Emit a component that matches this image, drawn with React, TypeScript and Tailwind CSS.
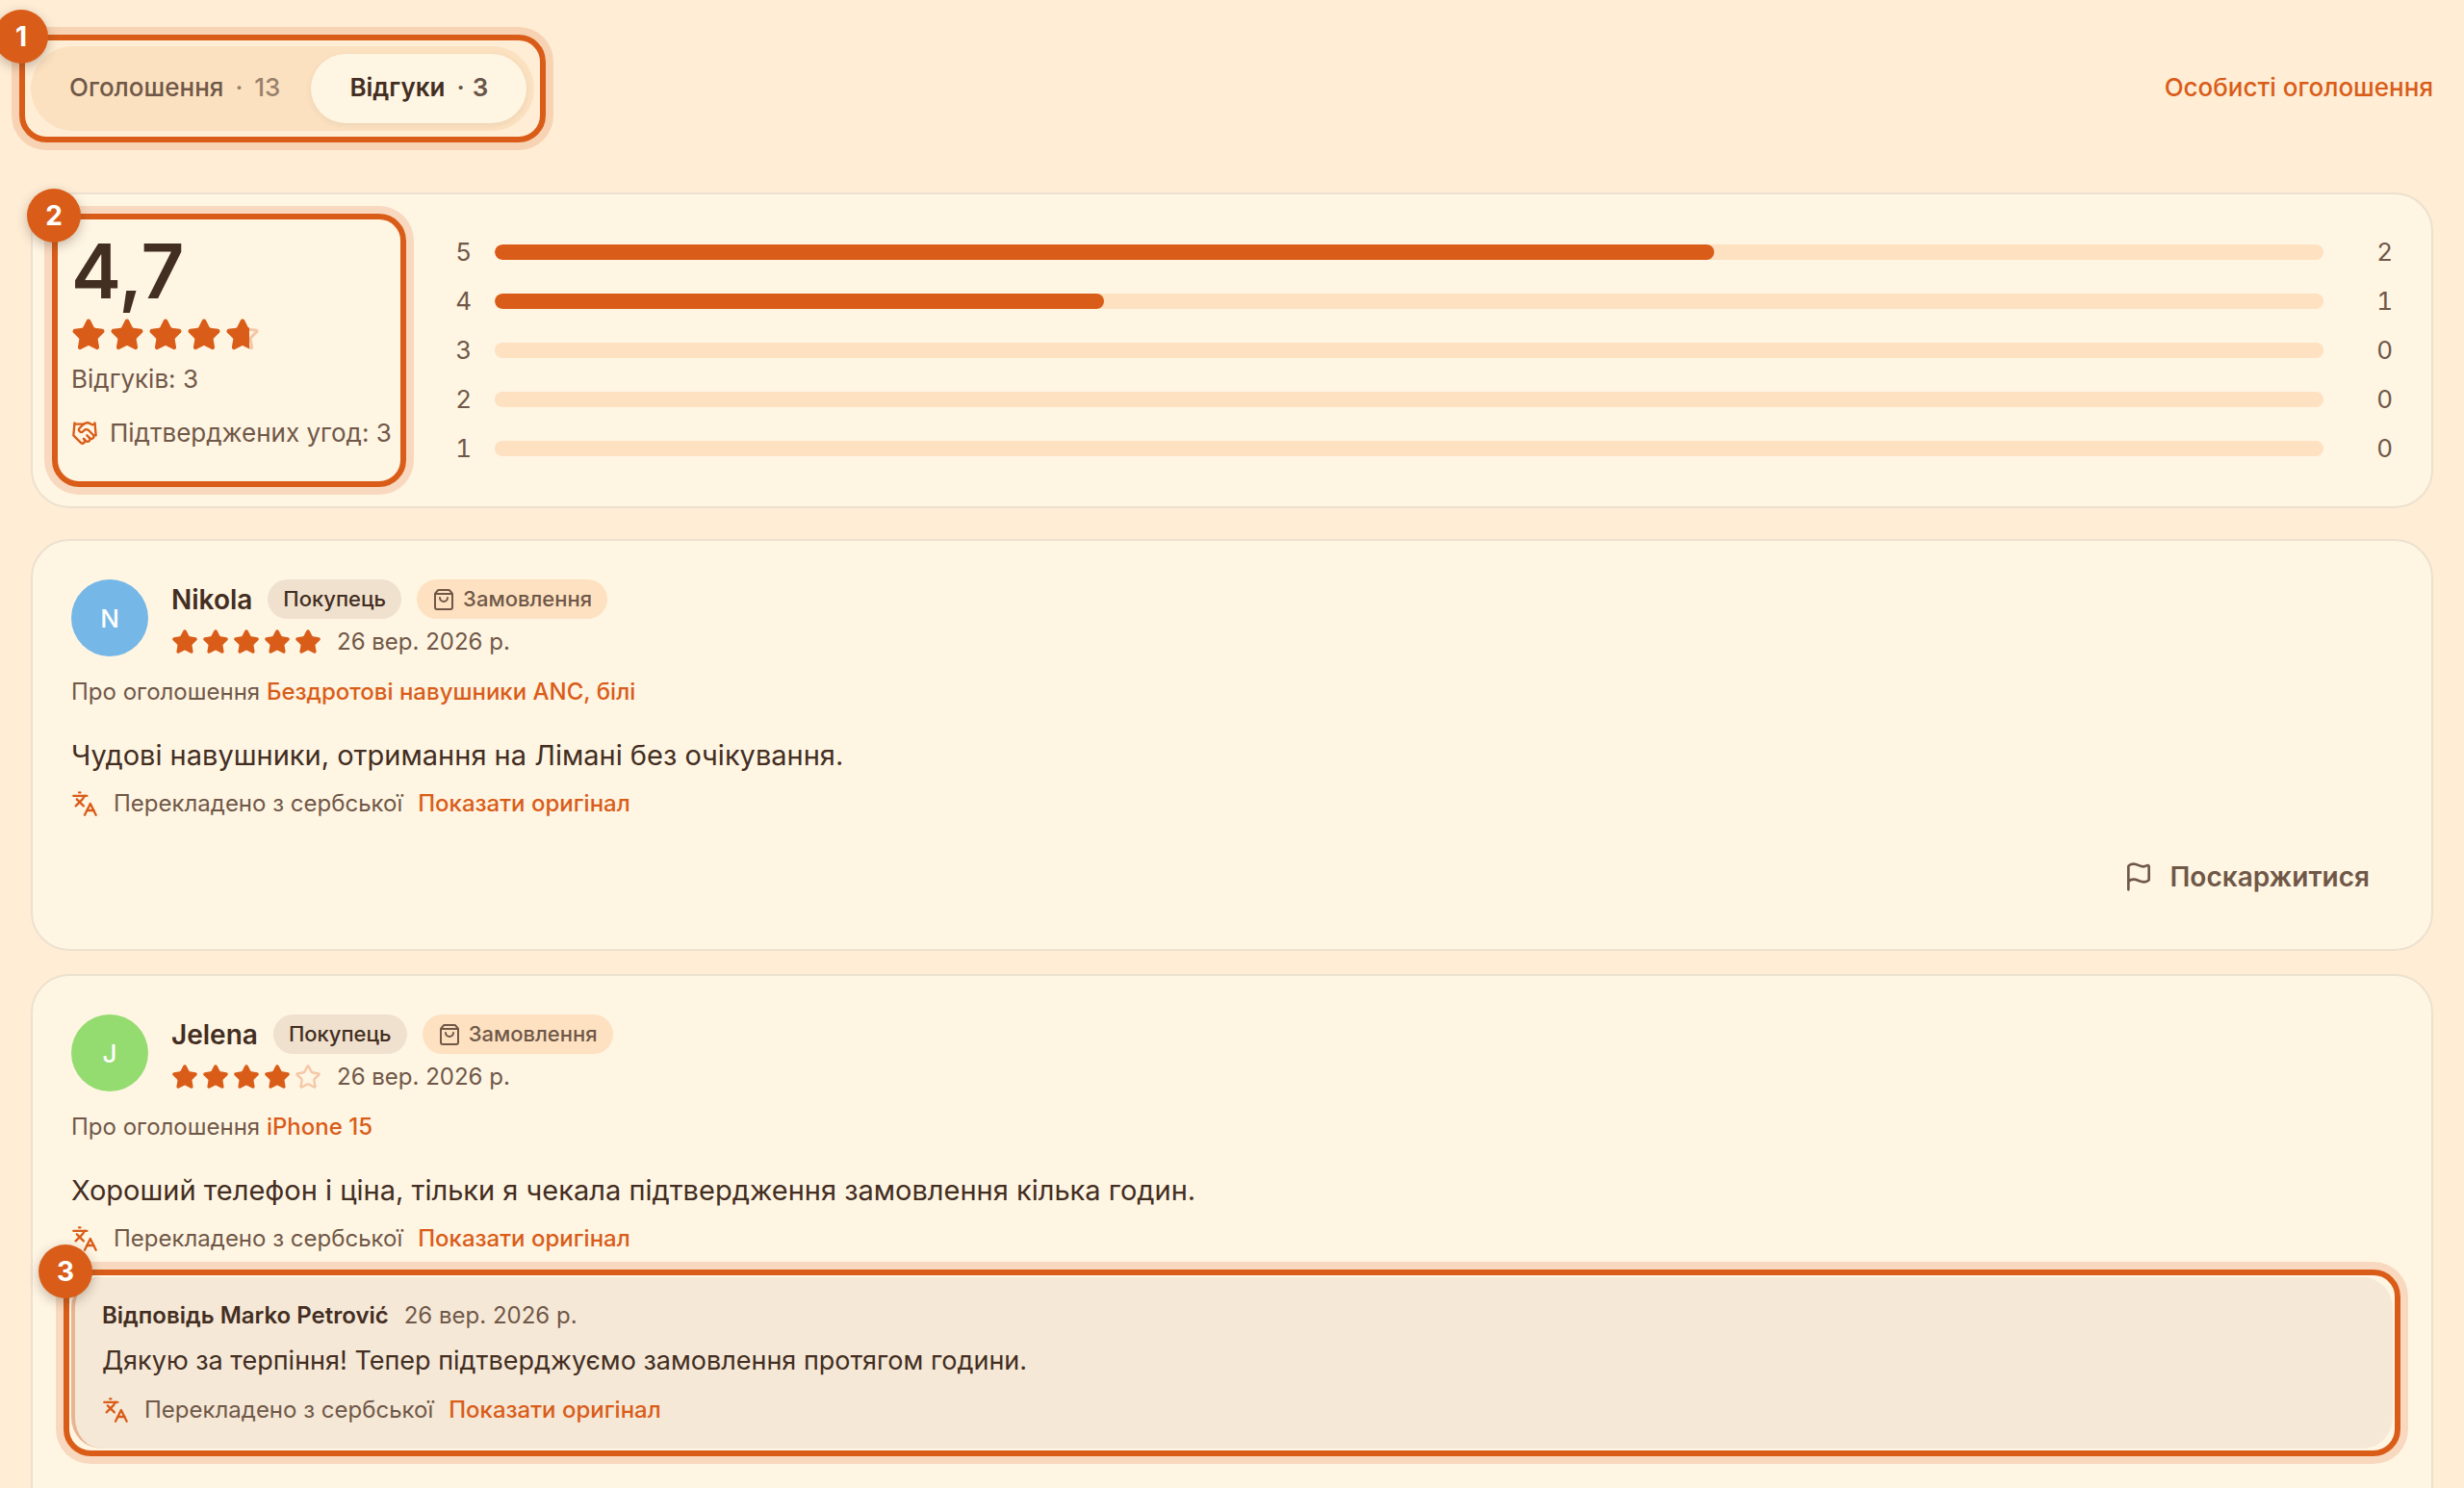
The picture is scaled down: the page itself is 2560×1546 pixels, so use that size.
import React, { useState } from 'react';
import { Flag, Handshake, Languages, ShoppingBag, Star } from 'lucide-react';

interface Reply {
  author: string;
  date: string;
  text: string;
}

interface Review {
  name: string;
  color: string;
  rating: number;
  date: string;
  listing: string;
  text: string;
  reply?: Reply;
}

const distribution = [
  { stars: 5, count: 2 },
  { stars: 4, count: 1 },
  { stars: 3, count: 0 },
  { stars: 2, count: 0 },
  { stars: 1, count: 0 },
];

const total = 3;

const reviews: Review[] = [
  {
    name: 'Nikola',
    color: 'bg-[#75b7e6]',
    rating: 5,
    date: '26 вер. 2026 р.',
    listing: 'Бездротові навушники ANC, білі',
    text: 'Чудові навушники, отримання на Лімані без очікування.',
  },
  {
    name: 'Jelena',
    color: 'bg-[#94dc70]',
    rating: 4,
    date: '26 вер. 2026 р.',
    listing: 'iPhone 15',
    text: 'Хороший телефон і ціна, тільки я чекала підтвердження замовлення кілька годин.',
    reply: {
      author: 'Marko Petrović',
      date: '26 вер. 2026 р.',
      text: 'Дякую за терпіння! Тепер підтверджуємо замовлення протягом години.',
    },
  },
];

// Numbered frame drawn over the block it points at
const Callout: React.FC<{ step: number; inset: string }> = ({ step, inset }) => (
  <div className={`pointer-events-none absolute z-10 rounded-[28px] border-6 border-[#d95d19] shadow-[0_0_0_8px_rgba(217,93,25,0.18)] ${inset}`}>
    <span className="absolute -left-8 -top-8 flex size-14 items-center justify-center rounded-full bg-[#d95d19] text-[28px] font-bold text-white shadow-[0_4px_12px_rgba(67,46,34,0.3)]">
      {step}
    </span>
  </div>
);

const Stars: React.FC<{ value: number; size: number }> = ({ value, size }) => (
  <div className="flex gap-1" role="img" aria-label={`${value} / 5`}>
    {[0, 1, 2, 3, 4].map((i) => {
      const part = Math.max(0, Math.min(1, value - i));
      return (
        <span key={i} className="relative block">
          <Star size={size} className={part === 1 ? 'fill-[#d95d19] text-[#d95d19]' : 'text-[#d95d19]/30'} />
          {part > 0 && part < 1 && (
            <span className="absolute inset-y-0 left-0 overflow-hidden" style={{ width: `${part * 100}%` }}>
              <Star size={size} className="max-w-none fill-[#d95d19] text-[#d95d19]" />
            </span>
          )}
        </span>
      );
    })}
  </div>
);

const Translated: React.FC = () => (
  <div className="flex items-center gap-4 text-[24px] leading-10">
    <Languages size={28} className="text-[#d95d19]" />
    <span>Перекладено з сербської</span>
    <button type="button" className="font-medium text-[#d95d19]">Показати оригінал</button>
  </div>
);

const ReviewCard: React.FC<{ review: Review }> = ({ review }) => (
  <article className={`rounded-[40px] border-2 border-[#ece1cf] bg-[#fff5e3] px-10 pt-10 ${review.reply ? 'pb-28' : 'pb-10'}`}>
    <div className="flex gap-6">
      <div className={`flex size-20 shrink-0 items-center justify-center rounded-full text-[26px] font-medium text-white ${review.color}`}>
        {review.name[0]}
      </div>
      <div>
        <div className="flex h-[41px] items-center gap-4">
          <span className="text-[28px] font-semibold text-[#432e22]">{review.name}</span>
          <span className="flex h-full items-center rounded-full bg-[#f0e1ce] px-4 text-[22px] font-medium text-[#432e22]">Покупець</span>
          <span className="flex h-full items-center gap-2 rounded-full bg-[#fde1c1] px-4 text-[22px] font-medium">
            <ShoppingBag size={24} />
            Замовлення
          </span>
        </div>
        <div className="mt-1 flex items-center gap-4 text-[24px] leading-10">
          <Stars value={review.rating} size={28} />
          <span>{review.date}</span>
        </div>
      </div>
    </div>
    <p className="mt-3 text-[24px] leading-10">
      Про оголошення <a href="#listing" className="font-medium text-[#d95d19]">{review.listing}</a>
    </p>
    <p className="mt-6 mb-2 text-[29px] leading-11 text-[#432e22]">{review.text}</p>
    <Translated />
    {review.reply ? (
      <div className="relative mt-5 rounded-[32px] border-l-4 border-[#e8b593] bg-[#f5e8d7] px-7 py-5">
        <div className="flex gap-4 text-[24px] leading-10">
          <span className="font-semibold text-[#432e22]">Відповідь {review.reply.author}</span>
          <span>{review.reply.date}</span>
        </div>
        <p className="mt-1 mb-2 text-[27px] leading-[46px] text-[#432e22]">{review.reply.text}</p>
        <Translated />
        <Callout step={3} inset="-inset-y-2 -right-2 -left-3" />
      </div>
    ) : (
      <div className="mt-5 flex justify-end">
        <button type="button" className="flex h-[71px] items-center gap-4 px-6 text-[28px] font-semibold">
          <Flag size={32} />
          Поскаржитися
        </button>
      </div>
    )}
  </article>
);

const App: React.FC = () => {
  const [tab, setTab] = useState('reviews');

  const tabClass = (name: string) =>
    tab === name
      ? 'bg-[#fff5e3] px-10 font-semibold text-[#432e22] shadow-[0_2px_6px_rgba(67,46,34,0.08)]'
      : 'px-8 font-medium';

  return (
    <div className="h-screen overflow-hidden bg-[#ffedd5] px-8 pt-12 font-[Inter,sans-serif] text-[#705848]">
      <header className="flex items-center justify-between">
        <div className="relative flex rounded-full bg-[#fbe1c0] p-2 text-[26px]">
          <button type="button" onClick={() => setTab('listings')} className={`flex h-18 items-center gap-3 rounded-full pb-1 ${tabClass('listings')}`}>
            Оголошення
            <span className="flex gap-3 opacity-70"><span>·</span>13</span>
          </button>
          <button type="button" onClick={() => setTab('reviews')} className={`flex h-18 items-center gap-3 rounded-full pb-1 ${tabClass('reviews')}`}>
            Відгуки
            <span className="flex gap-2 opacity-80"><span>·</span>3</span>
          </button>
          <Callout step={1} inset="-inset-3" />
        </div>
        <a href="#personal" className="pb-1 text-[26px] font-medium text-[#d95d19]">Особисті оголошення</a>
      </header>

      <section className="mt-16 flex gap-10 rounded-[40px] border-2 border-[#ece1cf] bg-[#fff5e3] p-10">
        <div className="relative w-[328px] shrink-0 whitespace-nowrap text-[26px] leading-10">
          <p className="text-[78px] leading-[80px] font-semibold text-[#432e22]">4,7</p>
          <div className="my-2">
            <Stars value={4.7} size={36} />
          </div>
          <p>Відгуків: {total}</p>
          <p className="mt-4 flex items-center gap-3">
            <Handshake size={28} className="shrink-0 text-[#d95d19]" />
            Підтверджених угод: 3
          </p>
          <Callout step={2} inset="-inset-5" />
        </div>
        <div className="flex flex-1 flex-col gap-[11px] text-[26px] leading-10 tabular-nums">
          {distribution.map(({ stars, count }) => (
            <div key={stars} className="flex items-center gap-6">
              <span className="w-12 text-right">{stars}</span>
              <div className="h-4 flex-1 overflow-hidden rounded-full bg-[#fde1c1]">
                <div className="h-full rounded-full bg-[#d95d19]" style={{ width: `${(count / total) * 100}%` }} />
              </div>
              <span className="w-12 text-right">{count}</span>
            </div>
          ))}
        </div>
      </section>

      <main className="mt-8 flex flex-col gap-6">
        {reviews.map((review) => (
          <ReviewCard key={review.name} review={review} />
        ))}
      </main>
    </div>
  );
};

export default App;
